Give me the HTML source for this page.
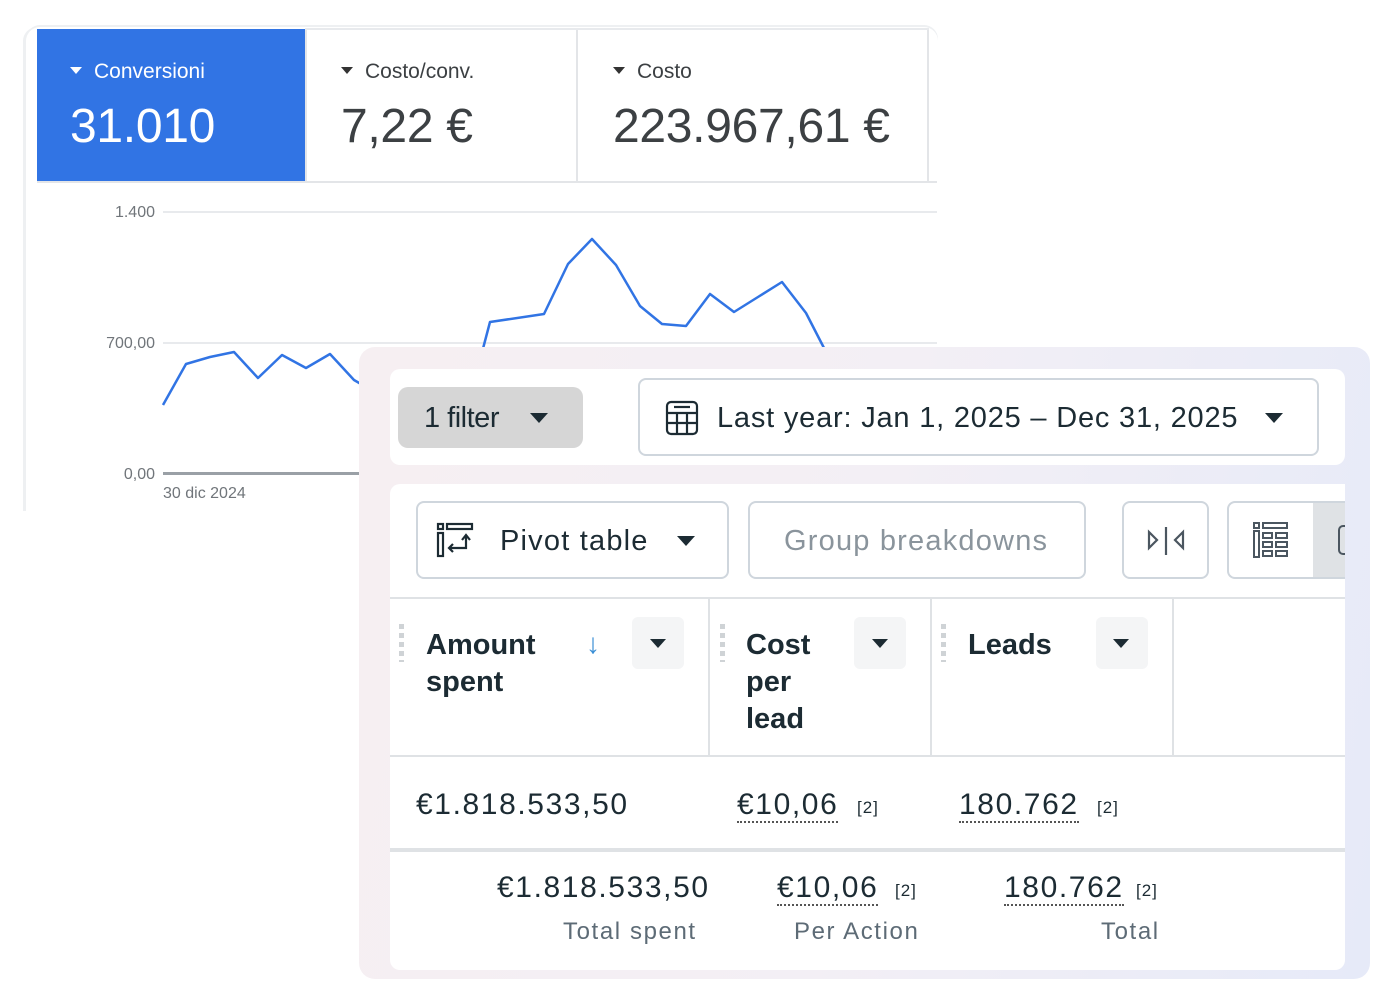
<!DOCTYPE html>
<html><head><meta charset="utf-8"><style>
*{margin:0;padding:0;box-sizing:border-box}
body{width:1395px;height:1000px;background:#fff;position:relative;overflow:hidden;font-family:"Liberation Sans",sans-serif}
.a{position:absolute}
.back{left:26px;top:27px;width:912px;height:484px;background:#fff;border-radius:14px 14px 0 0;box-shadow:-3px 0 0 #eef0f2, 0 -2px 0 #eef0f2}
.tri{display:inline-block;width:0;height:0;border-left:6px solid transparent;border-right:6px solid transparent;border-top:7px solid #333;vertical-align:middle;margin-right:12px;position:relative;top:-2px}
.lbl{font-size:21px;color:#3c4043}
.big{font-size:48px;color:#3c4043;letter-spacing:-0.3px}
.ax{font-size:16px;color:#70757a;text-align:right;width:60px}
.grid{height:2px;background:#e8eaed}
.panel{left:359px;top:347px;width:1011px;height:632px;border-radius:16px;background:linear-gradient(100deg,#f6eff2 0%,#f3eff5 50%,#e6eaf8 100%)}
.box{background:#fff;border-radius:10px}
.btn{border:2px solid #cfd6dd;border-radius:8px;background:#fff}
.pt{font-size:29px;color:#1c2b33}
.dtri{display:inline-block;width:0;height:0;border-left:9px solid transparent;border-right:9px solid transparent;border-top:10px solid #1c2b33}
.hd{font-size:29px;font-weight:bold;color:#1c2b33;line-height:37px}
.num{font-size:30px;color:#1c2b33;letter-spacing:1.6px}
.dot{border-bottom:2px dotted #555}
.sm{font-size:17px;color:#1c2b33;letter-spacing:1px}
.sub{font-size:24px;color:#5d6b76;letter-spacing:1.6px}
.cb{width:52px;height:52px;background:#f4f5f6;border-radius:6px}
.grip{width:5px;height:38px;background:repeating-linear-gradient(#cfd3d6 0 5px,transparent 5px 9px)}
</style></head><body>
<div class="a back"></div>
<div class="a" style="left:37px;top:29px;width:268px;height:152px;background:#3174e4"></div>
<div class="a" style="left:305px;top:29px;width:2px;height:152px;background:#e3e5e8"></div>
<div class="a" style="left:576px;top:29px;width:2px;height:152px;background:#e3e5e8"></div>
<div class="a" style="left:927px;top:29px;width:2px;height:152px;background:#e3e5e8"></div>
<div class="a" style="left:37px;top:181px;width:900px;height:2px;background:#e3e5e8"></div>
<div class="a" style="left:305px;top:28px;width:624px;height:2px;background:#e8eaed"></div>
<div class="a lbl" style="left:70px;top:60px;color:#fff"><span class="tri" style="border-top-color:#fff"></span>Conversioni</div>
<div class="a big" style="left:70px;top:99px;color:#fff">31.010</div>
<div class="a lbl" style="left:341px;top:60px"><span class="tri"></span>Costo/conv.</div>
<div class="a big" style="left:341px;top:99px">7,22 €</div>
<div class="a lbl" style="left:613px;top:60px"><span class="tri"></span>Costo</div>
<div class="a big" style="left:613px;top:99px">223.967,61 €</div>
<div class="a ax" style="left:95px;top:204px">1.400</div>
<div class="a ax" style="left:95px;top:335px">700,00</div>
<div class="a ax" style="left:95px;top:466px">0,00</div>
<div class="a grid" style="left:163px;top:211px;width:774px"></div>
<div class="a grid" style="left:163px;top:342px;width:774px"></div>
<div class="a" style="left:163px;top:472px;width:774px;height:3px;background:#9aa0a6"></div>
<div class="a" style="left:163px;top:485px;font-size:16px;color:#70757a">30 dic 2024</div>
<svg class="a" style="left:0;top:0" width="1000" height="520"><polyline fill="none" stroke="#3174e4" stroke-width="2.5" stroke-linejoin="round" points="163,405 186,364 210,357 234,352 258,378 282,355 306,368 330,354 354,380 380,395 480,360 490,322 544,314 568,264 592,239 616,265 640,306 662,324 686,326 710,294 734,312 758,297 782,282 806,313 824,348"/></svg>

<div class="a panel"></div>
<div class="a box" style="left:390px;top:369px;width:955px;height:96px"></div>
<div class="a" style="left:398px;top:387px;width:185px;height:61px;background:#d6d6d6;border-radius:10px"></div>
<div class="a pt" style="left:424px;top:402px;letter-spacing:-0.5px">1 filter</div>
<div class="a dtri" style="left:530px;top:413px"></div>
<div class="a btn" style="left:638px;top:378px;width:681px;height:78px"></div>
<svg class="a" style="left:664px;top:400px" width="36" height="36" viewBox="0 0 36 36" fill="none" stroke="#1c2b33" stroke-width="2.2"><rect x="3" y="2" width="30" height="32" rx="4"/><line x1="10" y1="7" x2="26" y2="7"/><line x1="3" y1="13" x2="33" y2="13"/><line x1="3" y1="23" x2="33" y2="23"/><line x1="13" y1="13" x2="13" y2="34"/><line x1="23" y1="13" x2="23" y2="34"/></svg>
<div class="a pt" style="left:717px;top:402px;letter-spacing:0.8px">Last year: Jan 1, 2025 – Dec 31, 2025</div>
<div class="a dtri" style="left:1265px;top:413px"></div>

<div class="a box" style="left:390px;top:484px;width:955px;height:486px;border-radius:10px 0 10px 10px;overflow:hidden">
<div class="a btn" style="left:837px;top:17px;width:130px;height:78px;border-right:none;border-radius:8px 0 0 8px"></div>
<div class="a" style="left:923px;top:19px;width:40px;height:74px;background:#dfe2e5"></div>
<div class="a" style="left:948px;top:41px;width:8px;height:30px;border:2px solid #4b5660;border-right:none;border-radius:5px 0 0 5px"></div>
</div>
<div class="a btn" style="left:416px;top:501px;width:313px;height:78px"></div>
<svg class="a" style="left:436px;top:522px" width="38" height="36" viewBox="0 0 38 36" fill="none" stroke="#1c2b33" stroke-width="2.2"><rect x="2" y="2" width="5" height="5"/><rect x="11" y="2" width="25" height="5"/><rect x="2" y="11" width="5" height="23"/><path d="M30 14 V26 H13 M17 22 L13 26 L17 30 M26 18 L30 13 L34 18"/></svg>
<div class="a pt" style="left:500px;top:525px;letter-spacing:1.2px">Pivot table</div>
<div class="a dtri" style="left:677px;top:536px"></div>
<div class="a btn" style="left:748px;top:501px;width:338px;height:78px"></div>
<div class="a pt" style="left:784px;top:525px;color:#8a949c;letter-spacing:1.2px">Group breakdowns</div>
<div class="a btn" style="left:1122px;top:501px;width:87px;height:78px"></div>
<svg class="a" style="left:1146px;top:526px" width="40" height="30" viewBox="0 0 40 30" fill="none" stroke="#4b5660" stroke-width="2.2"><path d="M3 6 L11 14 L3 22 Z M37 6 L29 14 L37 22 Z"/><line x1="20" y1="1" x2="20" y2="29"/></svg>
<svg class="a" style="left:1252px;top:522px" width="38" height="36" viewBox="0 0 38 36" fill="none" stroke="#4b5660" stroke-width="2"><rect x="2" y="1" width="5" height="5"/><rect x="11" y="1" width="24" height="5"/><rect x="2" y="9" width="5" height="26"/><rect x="11" y="11" width="9" height="5"/><rect x="24" y="11" width="11" height="5"/><rect x="11" y="20" width="9" height="5"/><rect x="24" y="20" width="11" height="5"/><rect x="11" y="29" width="9" height="5"/><rect x="24" y="29" width="11" height="5"/></svg>

<div class="a" style="left:390px;top:597px;width:955px;height:2px;background:#dfe2e5"></div>
<div class="a" style="left:708px;top:599px;width:2px;height:157px;background:#dfe2e5"></div>
<div class="a" style="left:930px;top:599px;width:2px;height:157px;background:#dfe2e5"></div>
<div class="a" style="left:1172px;top:599px;width:2px;height:157px;background:#dfe2e5"></div>
<div class="a" style="left:390px;top:755px;width:955px;height:2px;background:#dfe2e5"></div>
<div class="a" style="left:390px;top:848px;width:955px;height:4px;background:#dfe2e5"></div>

<div class="a grip" style="left:399px;top:624px"></div>
<div class="a hd" style="left:426px;top:627px">Amount<br>spent</div>
<div class="a" style="left:586px;top:628px;color:#3b8fd6;font-size:28px;font-weight:bold">↓</div>
<div class="a cb" style="left:632px;top:617px"></div><div class="a dtri" style="left:650px;top:639px;border-width:9px 8px 0"></div>
<div class="a grip" style="left:720px;top:624px"></div>
<div class="a hd" style="left:746px;top:627px">Cost<br>per<br>lead</div>
<div class="a cb" style="left:854px;top:617px"></div><div class="a dtri" style="left:872px;top:639px;border-width:9px 8px 0"></div>
<div class="a grip" style="left:941px;top:624px"></div>
<div class="a hd" style="left:968px;top:627px">Leads</div>
<div class="a cb" style="left:1096px;top:617px"></div><div class="a dtri" style="left:1113px;top:639px;border-width:9px 8px 0"></div>

<div class="a num" style="left:416px;top:788px">€1.818.533,50</div>
<div class="a num" style="left:737px;top:788px"><span class="dot">€10,06</span></div>
<div class="a sm" style="left:857px;top:798px">[2]</div>
<div class="a num" style="left:959px;top:788px"><span class="dot">180.762</span></div>
<div class="a sm" style="left:1097px;top:798px">[2]</div>

<div class="a num" style="left:497px;top:871px">€1.818.533,50</div>
<div class="a num" style="left:777px;top:871px"><span class="dot">€10,06</span></div>
<div class="a sm" style="left:895px;top:881px">[2]</div>
<div class="a num" style="left:1004px;top:871px"><span class="dot">180.762</span></div>
<div class="a sm" style="left:1136px;top:881px">[2]</div>
<div class="a sub" style="left:563px;top:918px">Total spent</div>
<div class="a sub" style="left:794px;top:918px">Per Action</div>
<div class="a sub" style="left:1101px;top:918px">Total</div>
</body></html>
